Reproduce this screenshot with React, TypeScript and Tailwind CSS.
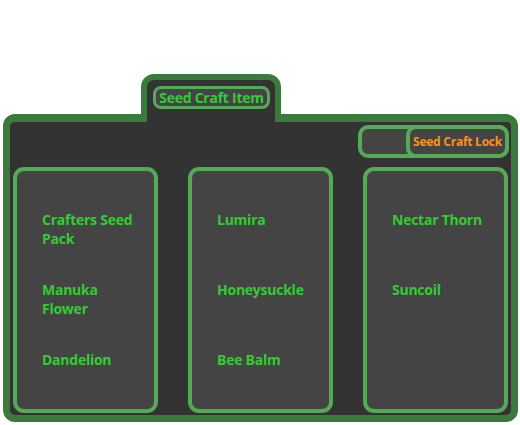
import React from "react";

const columns = [
  ["Crafters Seed Pack", "Manuka Flower", "Dandelion"],
  ["Lumira", "Honeysuckle", "Bee Balm"],
  ["Nectar Thorn", "Suncoil"],
];

const App = () => {
  const [locked, setLocked] = React.useState<boolean>(true);

  return (
    <div className="w-[520px] h-[425px] bg-white pt-[74px] pl-[3px] font-['Open_Sans',sans-serif] font-bold tracking-[-0.25px]">
      {/* Tab */}
      <div className="relative z-10 ml-[138px] -mb-[8px] w-[140px] h-[48px] bg-[#333333] border-[6px] border-b-0 border-[#3b7a3d] rounded-t-[13px] pt-[6px] px-[6px]">
        <button className="w-[117px] h-[23px] flex items-center justify-center border-[3px] border-[#55aa55] rounded-[8px] bg-[#444444] text-[14px] leading-none text-[#33cc33]">
          Seed Craft Item
        </button>
      </div>

      {/* Panel */}
      <div className="w-[515px] h-[308px] bg-[#333333] border-[7px] border-t-[8px] border-[#3b7a3d] rounded-[12px] pl-[3px] pr-[2px] pt-[3px]">
        <div className="flex justify-end">
          <button
            onClick={() => setLocked(!locked)}
            className="flex w-[151px] h-[33px] border-[4px] border-[#55aa55] rounded-[10px] bg-[#444444]"
          >
            <span className="ml-auto -my-[4px] -mr-[4px] w-[103px] h-[33px] flex items-center justify-center border-[4px] border-[#55aa55] rounded-[10px] bg-[#444444] text-[12px] text-[#ff9214]">
              Seed Craft Lock
            </span>
          </button>
        </div>

        <div className="flex gap-[30px] mt-[9px]">
          {columns.map((items, i) => (
            <div
              key={i}
              className="w-[145px] shrink-0 h-[246px] border-[4px] border-[#55aa55] rounded-[11px] bg-[#444444] pl-[25px] pt-[39px]"
            >
              {items.map((item) => (
                <div key={item} className="h-[70px] w-[98px] text-[14px] leading-[19px] text-[#33cc33]">
                  {item}
                </div>
              ))}
            </div>
          ))}
        </div>
      </div>
    </div>
  );
};

export default App;
